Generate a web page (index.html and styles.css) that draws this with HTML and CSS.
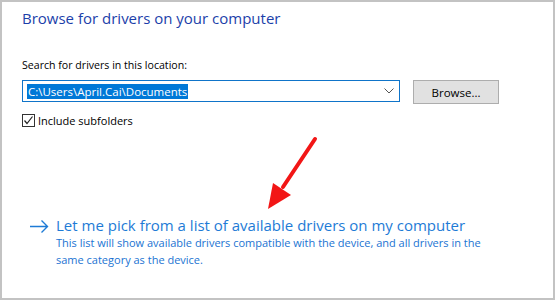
FILE: index.html
```html
<!DOCTYPE html>
<html lang="en">
<head>
    <meta charset="UTF-8">
    <title>Browse for drivers</title>
    <link rel="stylesheet" href="styles.css">
</head>
<body>
    <div class="dialog">
        <h2 class="title">Browse for drivers on your computer</h2>

        <label class="field-label">Search for drivers in this location:</label>
        <div class="path-row">
            <div class="combo">
                <span class="combo-text">C:\Users\April.Cai\Documents</span>
                <svg class="chevron" width="10" height="6" viewBox="0 0 10 6">
                    <path d="M0.5 0.5 L5 5 L9.5 0.5" fill="none" stroke="#555" stroke-width="1"/>
                </svg>
            </div>
            <button class="browse">Browse...</button>
        </div>

        <label class="check">
            <span class="box">
                <svg width="11" height="11" viewBox="0 0 11 11">
                    <path d="M1.5 5.5 L4 8.5 L9.5 1.5" fill="none" stroke="#222" stroke-width="1.2"/>
                </svg>
            </span>
            Include subfolders
        </label>

        <div class="pick">
            <svg class="pick-arrow" width="19" height="13" viewBox="0 0 19 13">
                <path d="M0 6.5 H17.5 M11.5 0.5 L17.5 6.5 L11.5 12.5" fill="none" stroke="#1e7bd6" stroke-width="1.4"/>
            </svg>
            <div class="pick-body">
                <a href="#" class="pick-link">Let me pick from a list of available drivers on my computer</a>
                <p class="pick-desc">This list will show available drivers compatible with the device, and all drivers in the same category as the device.</p>
            </div>
        </div>

        <svg class="pointer" width="60" height="80" viewBox="0 0 60 80">
            <line x1="54" y1="4" x2="22" y2="52" stroke="#f21616" stroke-width="4" stroke-linecap="round"/>
            <polygon points="7,74 12,48 30,60" fill="#f21616"/>
        </svg>
    </div>
</body>
</html>
```

FILE: styles.css
```css
body {
    margin: 0;
    font-family: 'Open Sans', 'Noto Sans', Arial, sans-serif;
}

.dialog {
    position: relative;
    box-sizing: border-box;
    width: 555px;
    height: 300px;
    border: 2px solid #c3c3c3;
    background: #fff;
    padding: 6px 0 0 20px;
}

.title {
    margin: 0;
    font-size: 15px;
    font-weight: 400;
    color: #1c3faa;
}

.field-label {
    display: block;
    margin-top: 30px;
    font-size: 10.6px;
    color: #000;
}

.path-row {
    display: flex;
    gap: 13px;
    margin-top: 8px;
}

.combo {
    box-sizing: border-box;
    width: 378px;
    height: 22px;
    border: 1px solid #0f74c9;
    display: flex;
    align-items: center;
    justify-content: space-between;
    padding: 0 4px 0 4px;
}

.combo-text {
    background: #0078d7;
    color: #fff;
    font-size: 11.5px;
    line-height: 15px;
    padding: 0 1px;
}

.chevron {
    margin-right: 1px;
}

.browse {
    box-sizing: border-box;
    width: 86px;
    height: 24px;
    background: #e1e1e1;
    border: 1px solid #adadad;
    font-family: inherit;
    font-size: 11.5px;
    color: #000;
    padding: 0;
}

.check {
    display: flex;
    align-items: center;
    gap: 3px;
    margin-top: 9px;
    font-size: 11px;
}

.box {
    box-sizing: border-box;
    width: 13px;
    height: 13px;
    border: 1px solid #333;
    display: flex;
    align-items: center;
    justify-content: center;
}

.pick {
    display: flex;
    gap: 7px;
    margin-top: 87px;
    padding-left: 8px;
}

.pick-arrow {
    margin-top: 5px;
}

.pick-link {
    display: block;
    font-size: 15px;
    color: #1e7bd6;
    text-decoration: none;
}

.pick-desc {
    margin: -1px 0 0;
    width: 445px;
    font-size: 11px;
    line-height: 17px;
    color: #1a73d2;
}

.pointer {
    position: absolute;
    left: 259px;
    top: 133px;
}
```
